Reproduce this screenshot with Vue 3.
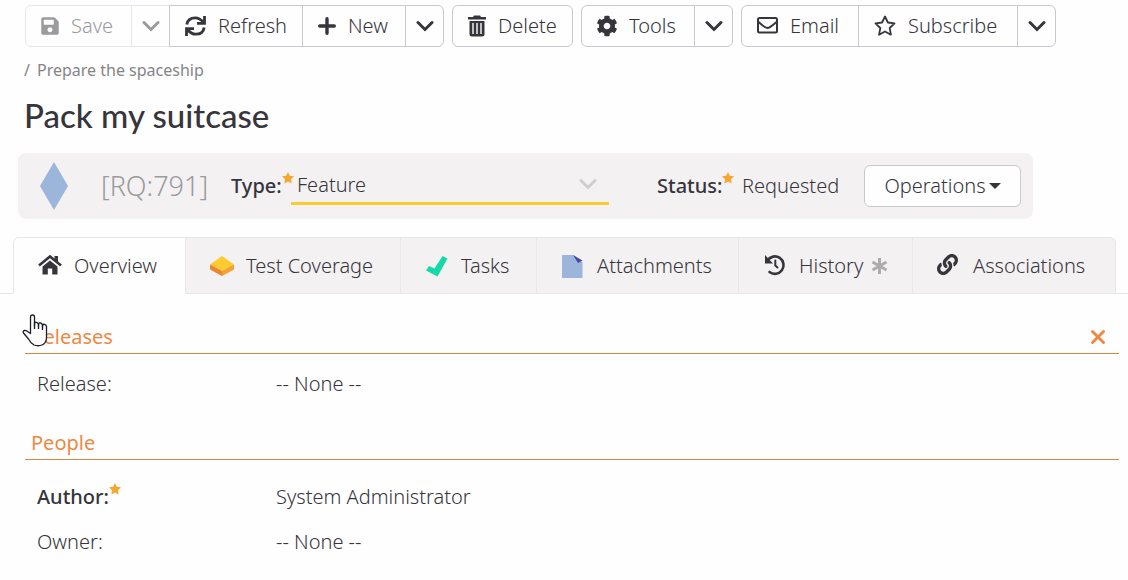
<script setup>
import { ref } from 'vue'

const type = ref('Feature')
const activeTab = ref('overview')

const tabs = [
  { id: 'overview', label: 'Overview' },
  { id: 'coverage', label: 'Test Coverage' },
  { id: 'tasks', label: 'Tasks' },
  { id: 'attachments', label: 'Attachments' },
  { id: 'history', label: 'History', changed: true },
  { id: 'associations', label: 'Associations' },
]
</script>

<template>
  <main class="page">
    <div class="toolbar">
      <div class="group">
        <button class="btn save" disabled>
          <svg width="18" height="20" viewBox="0 0 448 512" fill="currentColor"><path d="M433.941 129.941l-83.882-83.882A48 48 0 0 0 316.118 32H48C21.49 32 0 53.49 0 80v352c0 26.51 21.49 48 48 48h352c26.51 0 48-21.49 48-48V163.882a48 48 0 0 0-14.059-33.941zM224 416c-35.346 0-64-28.654-64-64 0-35.346 28.654-64 64-64s64 28.654 64 64c0 35.346-28.654 64-64 64zm96-304.52V212c0 6.627-5.373 12-12 12H76c-6.627 0-12-5.373-12-12V108c0-6.627 5.373-12 12-12h228.52c3.183 0 6.235 1.264 8.485 3.515l3.48 3.48A11.996 11.996 0 0 1 320 111.48z" /></svg>
          Save
        </button>
        <button class="btn more" disabled aria-label="Save options">
          <svg width="18" height="12" viewBox="0 0 18 12" class="chev"><path d="M2 2.500L9 9.500L16 2.500" /></svg>
        </button>
        <button class="btn refresh">
          <svg width="21" height="22" viewBox="0 0 21 22" fill="none" stroke="currentColor" stroke-width="2.800">
            <path d="M1.800 9.500C2.500 5 6 2.800 10.300 2.800C13.600 2.800 15.800 4.200 18.200 7" />
            <path d="M19.500 1V8.300H12" />
            <path d="M19.200 12.500C18.500 17 15 19.200 10.700 19.200C7.400 19.200 5.200 17.800 2.800 15" />
            <path d="M1.500 21V13.700H9" />
          </svg>
          Refresh
        </button>
        <button class="btn new">
          <svg width="18" height="18" viewBox="0 0 18 18" fill="none" stroke="currentColor" stroke-width="3.400" stroke-linecap="round"><path d="M9 1.700V16.300M1.700 9H16.300" /></svg>
          New
        </button>
        <button class="btn more" aria-label="New options">
          <svg width="18" height="12" viewBox="0 0 18 12" class="chev"><path d="M2 2.500L9 9.500L16 2.500" /></svg>
        </button>
      </div>
      <div class="group">
        <button class="btn delete">
          <svg width="18" height="22" viewBox="0 0 18 22">
            <path fill="currentColor" fill-rule="evenodd" d="M0 2H5L6 .5H12L13 2H18V4.500H0ZM1.500 6H16.500V19Q16.500 21.500 14 21.500H4Q1.500 21.500 1.500 19ZM4.300 8V19H5.700V8ZM8.300 8V19H9.700V8ZM12.300 8V19H13.700V8Z" />
          </svg>
          Delete
        </button>
      </div>
      <div class="group">
        <button class="btn tools">
          <svg width="20" height="22" viewBox="16 0 480 512" fill="currentColor"><path d="M487.4 315.7l-42.6-24.6c4.3-23.2 4.3-47 0-70.2l42.6-24.6c4.9-2.8 7.1-8.6 5.5-14-11.1-35.6-30-67.8-54.7-94.6-3.8-4.1-10-5.1-14.8-2.3L380.800 110c-17.9-15.4-38.5-27.3-60.8-35.1V25.800c0-5.6-3.9-10.5-9.4-11.7-36.7-8.2-74.3-7.8-109.2 0-5.5 1.2-9.4 6.1-9.4 11.7V75c-22.2 7.9-42.8 19.8-60.8 35.1L88.700 85.500c-4.9-2.8-11-1.9-14.8 2.3-24.7 26.7-43.6 58.9-54.7 94.6-1.7 5.4.6 11.2 5.5 14L67.300 221c-4.3 23.2-4.3 47 0 70.2l-42.6 24.6c-4.9 2.8-7.1 8.6-5.5 14 11.1 35.6 30 67.8 54.7 94.6 3.8 4.1 10 5.1 14.8 2.3l42.6-24.6c17.9 15.4 38.5 27.3 60.8 35.1v49.2c0 5.6 3.9 10.5 9.4 11.7 36.7 8.2 74.3 7.8 109.2 0 5.5-1.2 9.4-6.1 9.4-11.7v-49.2c22.2-7.9 42.8-19.8 60.8-35.1l42.6 24.6c4.9 2.8 11 1.9 14.8-2.3 24.7-26.7 43.6-58.9 54.7-94.6 1.5-5.5-.7-11.3-5.6-14.1zM256 336c-44.1 0-80-35.9-80-80s35.9-80 80-80 80 35.900 80 80-35.900 80-80 80z" /></svg>
          Tools
        </button>
        <button class="btn more" aria-label="Tool options">
          <svg width="18" height="12" viewBox="0 0 18 12" class="chev"><path d="M2 2.500L9 9.500L16 2.500" /></svg>
        </button>
      </div>
      <div class="group">
        <button class="btn email">
          <svg width="21" height="18" viewBox="0 0 21 18" fill="none" stroke="currentColor" stroke-width="2" stroke-linejoin="round">
            <rect x="1" y="1" width="19" height="14.500" rx="1.500" />
            <path d="M1.500 5C5 8 8 11 10.500 11S16 8 19.500 5" />
          </svg>
          Email
        </button>
        <button class="btn subscribe">
          <svg width="22" height="22" viewBox="0 0 22 22" fill="none" stroke="currentColor" stroke-width="1.800" stroke-linejoin="round"><path d="M11 1.500L13.900 7.500L20.500 8.400L15.700 13L16.900 19.700L11 16.500L5.100 19.700L6.300 13L1.500 8.400L8.100 7.500Z" /></svg>
          Subscribe
        </button>
        <button class="btn more" aria-label="Subscribe options">
          <svg width="18" height="12" viewBox="0 0 18 12" class="chev"><path d="M2 2.500L9 9.500L16 2.500" /></svg>
        </button>
      </div>
    </div>

    <nav class="crumbs" aria-label="Breadcrumb">
      <span>/</span>
      <a href="#">Prepare the spaceship</a>
    </nav>
    <h1>Pack my suitcase</h1>

    <section class="summary">
      <svg class="diamond" width="28" height="48" viewBox="0 0 28 48"><path fill="#9bb5db" d="M14 0L28 24L14 48L0 24Z" /></svg>
      <span class="token">[RQ:791]</span>
      <label class="required" for="type">Type:<svg class="star" width="12" height="12" viewBox="0 0 12 12"><path d="M6 0L7.800 3.800L12 4.300L9 7.300L9.700 11.600L6 9.600L2.300 11.600L3 7.300L0 4.300L4.200 3.800Z" /></svg></label>
      <div class="picker">
        <select id="type" v-model="type">
          <option>Feature</option>
          <option>Need</option>
          <option>Quality</option>
        </select>
        <svg width="18" height="12" viewBox="0 0 18 12" class="chev"><path d="M2 2.500L9 9.500L16 2.500" /></svg>
      </div>
      <span class="required status">Status:<svg class="star" width="12" height="12" viewBox="0 0 12 12"><path d="M6 0L7.800 3.800L12 4.300L9 7.300L9.700 11.600L6 9.600L2.300 11.600L3 7.300L0 4.300L4.200 3.800Z" /></svg></span>
      <span class="state">Requested</span>
      <button class="operations">
        Operations
        <svg width="12" height="6" viewBox="0 0 12 6"><path fill="currentColor" d="M0 0H12L6 6Z" /></svg>
      </button>
    </section>

    <div class="tabbar">
      <div class="tabs" role="tablist">
        <button
          v-for="tab in tabs"
          :key="tab.id"
          class="tab"
          :class="{ active: activeTab === tab.id }"
          role="tab"
          :aria-selected="activeTab === tab.id"
          @click="activeTab = tab.id"
        >
          <svg v-if="tab.id === 'overview'" width="24" height="24" viewBox="0 0 24 24">
            <path fill="none" stroke="currentColor" stroke-width="2.600" d="M1 11.500L12 2.500L23 11.500" />
            <path fill="currentColor" d="M16.500 2H20V8L16.500 5ZM12 6.500L19.500 12.500V20.500H14.200V14.500H9.800V20.500H4.500V12.500Z" />
          </svg>
          <svg v-else-if="tab.id === 'coverage'" width="24" height="24" viewBox="0 0 24 24">
            <path fill="#fdca30" d="M12 2L24 10.500L12 17L0 10.500Z" />
            <path fill="#ec8532" d="M0 10.500L12 17V22L0 15.500Z" />
            <path fill="#f5a033" d="M24 10.500L12 17V22L24 15.500Z" />
          </svg>
          <svg v-else-if="tab.id === 'tasks'" width="24" height="24" viewBox="0 0 24 24">
            <path fill="#15d9a8" d="M1 16.500L4 12L9.500 14.500L17.500 2L22.500 4.500L12.500 22.500Z" />
          </svg>
          <svg v-else-if="tab.id === 'attachments'" width="24" height="24" viewBox="0 0 24 24">
            <path fill="#9bb5db" d="M1 1H12.500L21.500 8.500V24H1Z" />
            <path fill="#4b49a8" d="M12 1L21.500 6.500L17 9Z" />
          </svg>
          <svg v-else-if="tab.id === 'history'" width="24" height="24" viewBox="0 0 24 24" fill="none" stroke="currentColor">
            <path stroke-width="2.600" stroke-linecap="round" d="M4.500 6.500A8.700 8.700 0 1 1 6.500 18" />
            <path fill="currentColor" stroke="none" d="M2 1V9.500H10Z" />
            <path stroke-width="2" stroke-linecap="round" d="M12.300 6.500V11.500L14.500 13.500" />
          </svg>
          <svg v-else width="24" height="24" viewBox="0 0 585 585" fill="currentColor"><path d="M326.612 185.391c59.747 59.809 58.927 155.698.36 214.59-.11.12-.24.25-.36.37l-67.2 67.2c-59.27 59.27-155.699 59.262-214.96 0-59.27-59.26-59.27-155.7 0-214.96l37.106-37.106c9.84-9.84 26.786-3.3 27.294 10.606.648 17.722 3.826 35.527 9.690 52.721 1.986 5.822.567 12.262-3.783 16.612l-13.087 13.087c-28.026 28.026-28.905 73.660-1.155 101.960 28.024 28.579 74.086 28.749 102.325.51l67.200-67.190c28.191-28.191 28.073-73.757 0-101.830-3.701-3.694-7.429-6.564-10.341-8.569a16.037 16.037 0 0 1-6.947-12.606c-.396-10.567 3.348-21.456 11.698-29.806l21.054-21.055c5.521-5.521 14.182-6.199 20.584-1.731a152.482 152.482 0 0 1 20.522 17.197zM467.547 44.449c-59.261-59.262-155.690-59.270-214.960 0l-67.200 67.200c-.12.12-.25.25-.36.37-58.566 58.892-59.387 154.781.36 214.590a152.454 152.454 0 0 0 20.521 17.196c6.402 4.468 15.064 3.789 20.584-1.731l21.054-21.055c8.350-8.350 12.094-19.239 11.698-29.806a16.037 16.037 0 0 0-6.947-12.606c-2.912-2.005-6.640-4.875-10.341-8.569-28.073-28.073-28.191-73.639 0-101.830l67.200-67.190c28.239-28.239 74.300-28.069 102.325.51 27.750 28.300 26.872 73.934-1.155 101.960l-13.087 13.087c-4.350 4.350-5.769 10.790-3.783 16.612 5.864 17.194 9.042 34.999 9.690 52.721.509 13.906 17.454 20.446 27.294 10.606l37.106-37.106c59.271-59.259 59.271-155.699.001-214.959z" /></svg>
          <span>{{ tab.label }}</span>
          <svg v-if="tab.changed" class="changed" width="17" height="18" viewBox="0 0 17 18"><path d="M8.500 1V17M1.500 5L15.500 13M15.500 5L1.500 13" /></svg>
        </button>
      </div>
    </div>

    <div class="details">
      <section>
        <header class="heading">
          <h2>Releases</h2>
          <button class="close" aria-label="Close">
            <svg width="16" height="16" viewBox="0 0 16 16"><path d="M2.500 2.500L13.500 13.500M13.500 2.500L2.500 13.500" /></svg>
          </button>
          <svg class="pointer" width="26" height="33" viewBox="0 0 26 33"><path fill="#fefefe" stroke="#1d1d28" stroke-width="1.300" stroke-linejoin="round" d="M8.500 19.500V3Q8.500 1 10.500 1T12.500 3V12V9.500Q12.800 8 14.300 8.300T16.500 10V12.500V10Q17 8.700 18.500 9T20.500 11V13.500V11.500Q21 10 22.500 10.300T24.500 12.500V24Q24 29.500 20 31Q16 32.500 12 31Q8.500 29 6.500 25L1.500 19Q.5 17 2.500 16.500Q4 16.300 5.500 17.500Z" /><path fill="none" stroke="#1d1d28" stroke-width="1.300" d="M12.500 9V15M16.500 10V15M20.500 11V16" /></svg>
        </header>
        <dl class="fields compact">
          <div class="field"><dt>Release:</dt><dd>-- None --</dd></div>
        </dl>
      </section>
      <section>
        <header class="heading"><h2>People</h2></header>
        <dl class="fields">
          <div class="field">
            <dt class="required">Author:<svg class="star" width="12" height="12" viewBox="0 0 12 12"><path d="M6 0L7.800 3.800L12 4.300L9 7.300L9.700 11.600L6 9.600L2.300 11.600L3 7.300L0 4.300L4.200 3.800Z" /></svg></dt>
            <dd>System Administrator</dd>
          </div>
          <div class="field"><dt>Owner:</dt><dd>-- None --</dd></div>
        </dl>
      </section>
    </div>
  </main>
</template>

<style>
body {
  background: #fefefe;
}
</style>

<style scoped>
.page {
  padding-top: 5px;
  color: #36353b;
  font-family: "Noto Sans", sans-serif;
  font-size: 20px;
  font-weight: 300;
  line-height: 28px;
}
button,
select {
  color: inherit;
  font: inherit;
}
svg {
  flex: none;
}
.chev {
  fill: none;
  stroke: currentColor;
  stroke-width: 3;
  stroke-linecap: round;
}
.toolbar {
  display: flex;
  gap: 8px;
  padding-left: 25px;
}
.group {
  display: flex;
}
.btn {
  display: flex;
  align-items: center;
  gap: 12px;
  box-sizing: border-box;
  height: 42px;
  padding: 0 0 0 15px;
  border: 1px solid #c9c9cf;
  background: #fefefe;
  white-space: nowrap;
}
.btn + .btn {
  margin-left: -1px;
}
.btn:first-child {
  border-radius: 6px 0 0 6px;
}
.btn:last-child {
  border-radius: 0 6px 6px 0;
}
.btn:only-child {
  border-radius: 6px;
}
.btn:disabled {
  border-color: #e6e6ec;
  color: #9b9a9d;
}
.save { width: 107px; }
.refresh { width: 134px; }
.new { width: 104px; }
.delete { width: 121px; }
.tools { width: 114px; }
.email { width: 118px; }
.subscribe { width: 160px; }
.btn.more {
  justify-content: center;
  width: 39px;
  padding: 0;
}
.crumbs {
  display: flex;
  gap: 7px;
  margin: 11px 24px 0;
  color: #858488;
  font-size: 16px;
  font-weight: 400;
  line-height: 24px;
}
.crumbs a {
  color: inherit;
  text-decoration: none;
}
h1 {
  margin: 13px 24px 18px;
  font-family: Lato, sans-serif;
  font-size: 33px;
  font-weight: 500;
  line-height: 40px;
}
.summary {
  display: flex;
  align-items: center;
  box-sizing: border-box;
  height: 66px;
  margin: 0 95px 0 18px;
  padding: 0 12px 0 22px;
  border-radius: 8px;
  background: #f4f1f3;
}
.token {
  width: 130px;
  margin-left: 33px;
  color: #9b9a9d;
  font-size: 27px;
}
.required {
  display: flex;
  font-weight: 500;
}
.star {
  fill: #f7a531;
}
.summary .required {
  width: 60px;
}
.picker {
  position: relative;
  flex: 1;
}
.picker select {
  width: 100%;
  height: 38px;
  padding: 0 6px;
  border: 0;
  border-bottom: 3px solid #facc34;
  border-radius: 0;
  outline: 0;
  background: transparent;
  appearance: none;
}
.picker .chev {
  position: absolute;
  top: 11px;
  right: 12px;
  color: #cfcdd0;
  pointer-events: none;
}
.summary .status {
  width: 85px;
  margin-left: 48px;
}
.state {
  width: 122px;
}
.operations {
  display: flex;
  align-items: center;
  justify-content: center;
  gap: 3px;
  box-sizing: border-box;
  width: 157px;
  height: 42px;
  padding: 0;
  border: 1px solid #c9c9cf;
  border-radius: 6px;
  background: #fefefe;
}
.tabbar {
  margin-top: 18px;
  padding: 0 12px 0 13px;
  border-bottom: 1px solid #e6e5ee;
}
.tabs {
  display: grid;
  grid-template-columns: 173fr 215fr 136fr 202fr 174fr 203fr;
  margin-bottom: -1px;
}
.tab {
  display: flex;
  align-items: center;
  gap: 12px;
  box-sizing: border-box;
  height: 57px;
  padding: 0 0 0 24px;
  border: 1px solid #e9e7ed;
  border-left-width: 0;
  background: #f4f1f3;
  white-space: nowrap;
}
.tab:first-child {
  border-left-width: 1px;
  border-radius: 6px 0 0 0;
}
.tab:last-child {
  border-radius: 0 6px 0 0;
}
.tab.active {
  border-bottom-color: #fefefe;
  background: #fefefe;
}
.changed {
  margin-left: -4px;
  fill: none;
  stroke: #acabae;
  stroke-width: 3;
}
.details {
  display: grid;
  gap: 21px;
  padding: 27px 9px 0 25px;
}
.heading {
  position: relative;
  display: flex;
  align-items: center;
  justify-content: space-between;
  height: 32px;
  padding: 0 13px 0 6px;
  border-bottom: 1px solid #d4893f;
  color: #ec8a45;
}
h2 {
  margin: 0;
  font: inherit;
  font-weight: 400;
}
.close {
  display: flex;
  padding: 0;
  border: 0;
  background: none;
}
.close path {
  fill: none;
  stroke: currentColor;
  stroke-width: 3;
  stroke-linecap: round;
}
.pointer {
  position: absolute;
  top: -7px;
  left: -3px;
}
.fields {
  margin: 0;
  padding-top: 14px;
}
.fields.compact {
  padding-top: 7px;
}
.field {
  display: grid;
  grid-template-columns: 239px 1fr;
  align-items: center;
  height: 45px;
  padding-left: 12px;
}
dd {
  margin: 0;
}
</style>
